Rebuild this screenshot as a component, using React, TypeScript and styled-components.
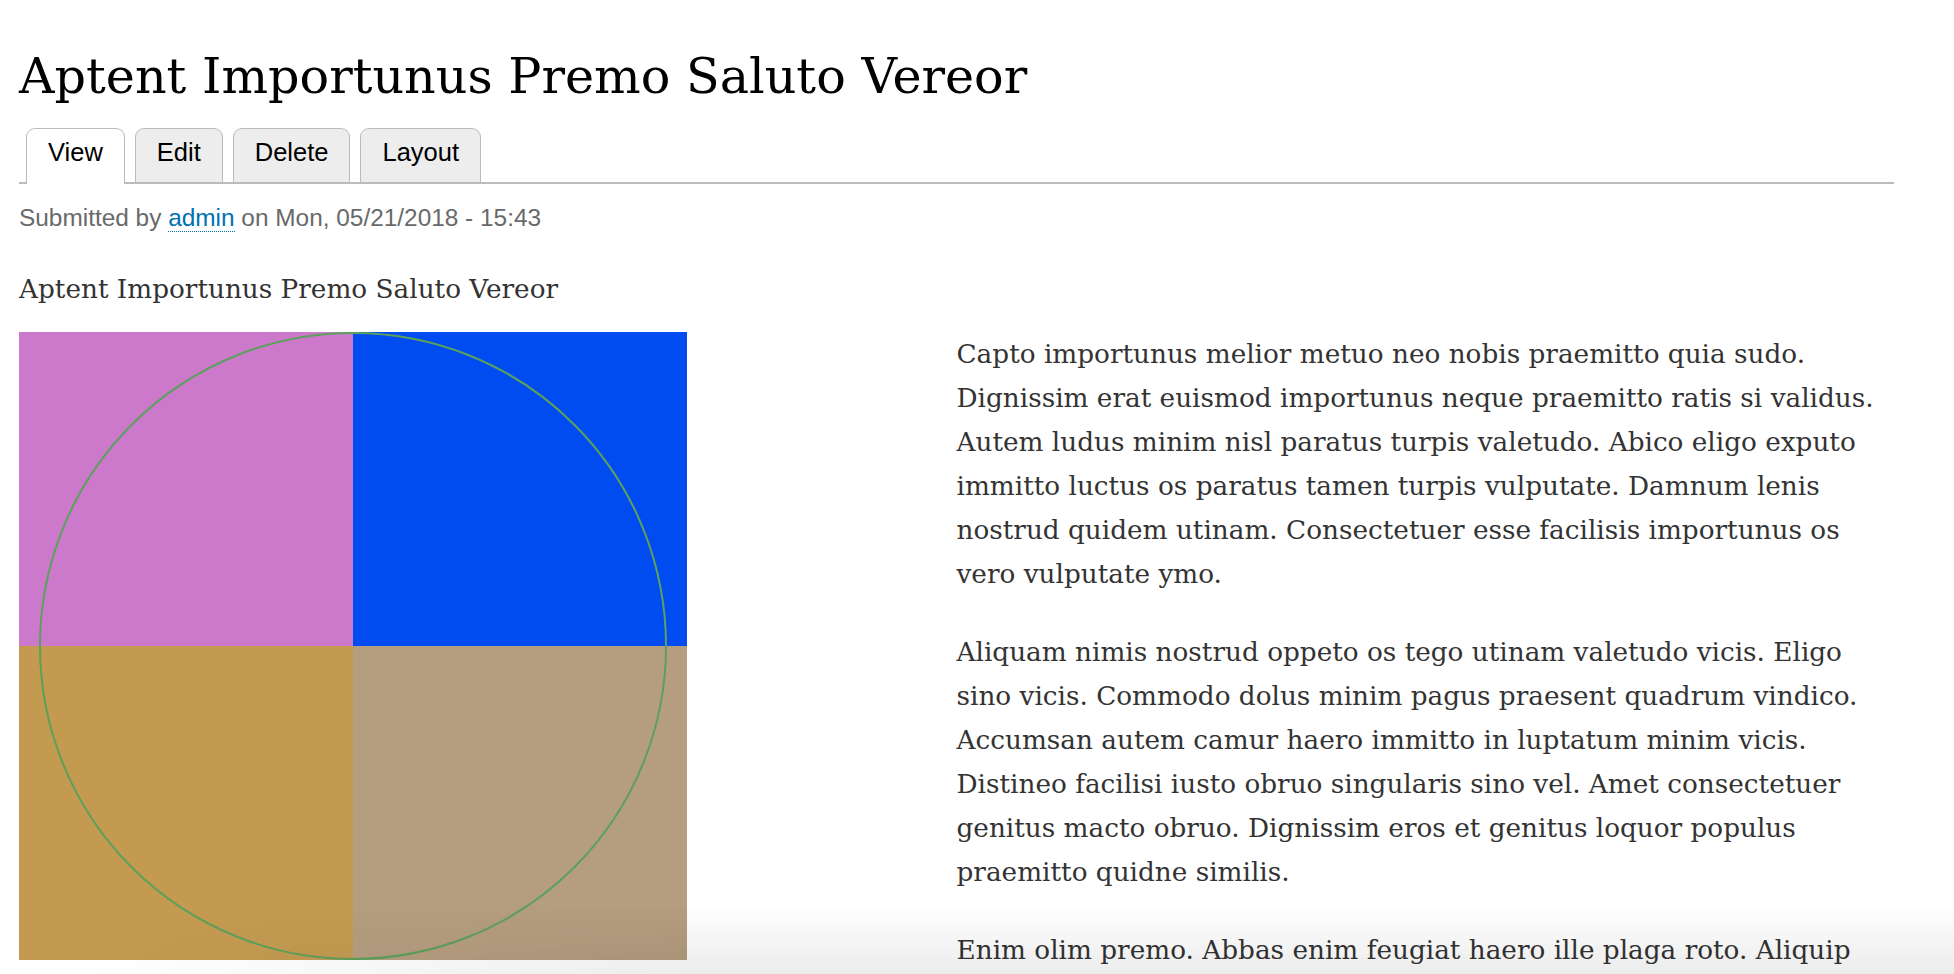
import React from "react";
import styled, { createGlobalStyle } from "styled-components";

const Global = createGlobalStyle`
  html, body { margin: 0; padding: 0; background: #fff; }
  body { font-family: "DejaVu Serif", Georgia, serif; color: #333; }
`;

const Page = styled.div`
  width: 1875px;
  padding: 46px 0 0 19px;
`;

const Title = styled.h1`
  font-family: "DejaVu Serif", Georgia, serif;
  font-weight: normal;
  font-size: 49.2px;
  line-height: 60px;
  color: #000;
  margin: 0;
`;

const TabBar = styled.ul`
  display: flex;
  align-items: flex-end;
  gap: 10px;
  list-style: none;
  margin: 22px 0 0;
  padding: 0 0 0 7px;
  border-bottom: 2px solid #bbb;
  height: 54px;
`;

const Tab = styled.li<{ $active?: boolean }>`
  display: flex;
  align-items: center;
  box-sizing: border-box;
  height: ${(p) => (p.$active ? "56px" : "54px")};
  margin-bottom: ${(p) => (p.$active ? "-2px" : "0")};
  padding: 0 21px ${(p) => (p.$active ? "9px" : "7px")};
  border: 1px solid #bbb;
  border-bottom: none;
  border-radius: 9px 9px 0 0;
  background: ${(p) => (p.$active ? "#fff" : "#ededed")};
  font-family: "Liberation Sans", Arial, sans-serif;
  font-size: 25.5px;
  color: #000;
`;

const Meta = styled.div`
  margin-top: 19px;
  font-family: "Liberation Sans", Arial, sans-serif;
  font-size: 24.4px;
  line-height: 30px;
  color: #68696b;
`;

const UserLink = styled.a`
  color: #0071b3;
  text-decoration: none;
  border-bottom: 1px dotted #0071b3;
`;

const Heading = styled.h2`
  margin: 41px 0 0;
  font-family: "DejaVu Serif", Georgia, serif;
  font-weight: normal;
  font-size: 26.3px;
  line-height: 30px;
  color: #333;
`;

const Columns = styled.div`
  display: grid;
  grid-template-columns: 1fr 1fr;
  margin-top: 28px;
`;

const Figure = styled.div`
  width: 668px;
  height: 628px;
  svg { display: block; }
`;

const Body = styled.div`
  p {
    margin: 0 0 34px;
    font-family: "DejaVu Serif", Georgia, serif;
    font-size: 26.3px;
    line-height: 44px;
    color: #333;
  }
`;

const Shade = styled.div`
  position: fixed;
  left: 0;
  right: 0;
  bottom: 0;
  height: 70px;
  pointer-events: none;
  background: linear-gradient(to top, rgba(0, 0, 0, 0.075), rgba(0, 0, 0, 0));
  -webkit-mask-image: linear-gradient(to right, transparent 80px, black 700px);
  mask-image: linear-gradient(to right, transparent 80px, black 700px);
`;

const tabs = ["View", "Edit", "Delete", "Layout"];

export default function App() {
  return (
    <>
      <Global />
      <Page>
        <Title>Aptent Importunus Premo Saluto Vereor</Title>
        <TabBar>
          {tabs.map((t, i) => (
            <Tab key={t} $active={i === 0}>
              {t}
            </Tab>
          ))}
        </TabBar>
        <Meta>
          Submitted by <UserLink href="#">admin</UserLink> on Mon, 05/21/2018 - 15:43
        </Meta>
        <Heading>Aptent Importunus Premo Saluto Vereor</Heading>
        <Columns>
          <Figure>
            <svg width="668" height="628" viewBox="0 0 668 628">
              <rect x="0" y="0" width="334" height="314" fill="#cc79cc" />
              <rect x="334" y="0" width="334" height="314" fill="#004cf0" />
              <rect x="0" y="314" width="334" height="314" fill="#c49a51" />
              <rect x="334" y="314" width="334" height="314" fill="#b59d7f" />
              <circle cx="334" cy="314" r="313" fill="none" stroke="#5ca05c" strokeWidth="2" />
            </svg>
          </Figure>
          <Body>
            <p>
              Capto importunus melior metuo neo nobis praemitto quia sudo. Dignissim erat euismod
              importunus neque praemitto ratis si validus. Autem ludus minim nisl paratus turpis
              valetudo. Abico eligo exputo immitto luctus os paratus tamen turpis vulputate. Damnum
              lenis nostrud quidem utinam. Consectetuer esse facilisis importunus os vero vulputate
              ymo.
            </p>
            <p>
              Aliquam nimis nostrud oppeto os tego utinam valetudo vicis. Eligo sino vicis. Commodo
              dolus minim pagus praesent quadrum vindico. Accumsan autem camur haero immitto in
              luptatum minim vicis. Distineo facilisi iusto obruo singularis sino vel. Amet
              consectetuer genitus macto obruo. Dignissim eros et genitus loquor populus praemitto
              quidne similis.
            </p>
            <p>
              Enim olim premo. Abbas enim feugiat haero ille plaga roto. Aliquip
            </p>
          </Body>
        </Columns>
      </Page>
      <Shade />
    </>
  );
}
